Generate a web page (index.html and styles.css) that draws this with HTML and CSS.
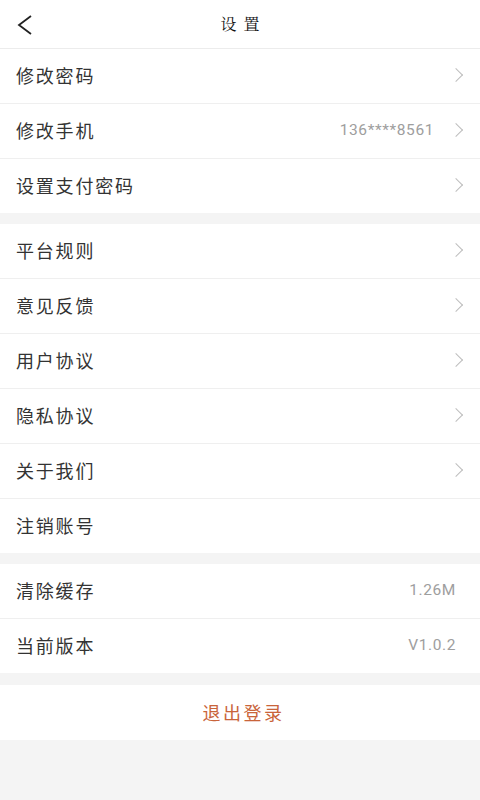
FILE: index.html
```html
<!DOCTYPE html>
<html lang="zh">
<head>
<meta charset="utf-8">
<link rel="stylesheet" href="styles.css">
</head>
<body>
<div class="page">
  <header class="nav">
    <svg class="back" width="16" height="20" viewBox="0 0 16 20"><path d="M14 1 L2 10 L14 19" fill="none" stroke="#222" stroke-width="1.8"/></svg>
    <div class="title">设置</div>
  </header>

  <section class="group">
    <div class="row"><span class="label">修改密码</span><span class="arrow"></span></div>
    <div class="row"><span class="label">修改手机</span><span class="value">136****8561</span><span class="arrow"></span></div>
    <div class="row"><span class="label">设置支付密码</span><span class="arrow"></span></div>
  </section>

  <section class="group">
    <div class="row"><span class="label">平台规则</span><span class="arrow"></span></div>
    <div class="row"><span class="label">意见反馈</span><span class="arrow"></span></div>
    <div class="row"><span class="label">用户协议</span><span class="arrow"></span></div>
    <div class="row"><span class="label">隐私协议</span><span class="arrow"></span></div>
    <div class="row"><span class="label">关于我们</span><span class="arrow"></span></div>
    <div class="row"><span class="label">注销账号</span></div>
  </section>

  <section class="group version">
    <div class="row"><span class="label">清除缓存</span><span class="value end">1.26M</span></div>
    <div class="row"><span class="label">当前版本</span><span class="value end">V1.0.2</span></div>
  </section>

  <section class="group">
    <div class="logout">退出登录</div>
  </section>
</div>
</body>
</html>
```

FILE: styles.css
```css
html, body {
  margin: 0;
  padding: 0;
  background: #f4f4f4;
}
body {
  font-family: "Noto Sans CJK SC", "Noto Sans", sans-serif;
  width: 480px;
  min-height: 800px;
}
.page {
  display: flex;
  flex-direction: column;
}
.nav {
  position: relative;
  height: 48px;
  background: #fff;
  border-bottom: 1px solid #ececec;
  display: flex;
  align-items: center;
  justify-content: center;
}
.back {
  position: absolute;
  left: 17px;
  top: 15px;
}
.title {
  font-family: "Noto Serif CJK SC", "AR PL UKai CN", serif;
  font-size: 16px;
  letter-spacing: 7px;
  color: #111;
  padding-left: 7px;
  margin-top: -2px;
}
.group {
  background: #fff;
  margin-bottom: 11px;
}
.group.version {
  margin-bottom: 12px;
}
.row {
  border-bottom: 1px solid #efefef;
  display: flex;
  align-items: center;
  padding: 0 14px 2px 16px;
  box-sizing: border-box;
  height: 55px;
}
.row:last-child {
  border-bottom: none;
  height: 54px;
}
.label {
  flex: 1;
  font-size: 18px;
  letter-spacing: 1.8px;
  color: #333;
}
.value {
  font-family: "Roboto", "Noto Sans", sans-serif;
  font-size: 15.5px;
  color: #9e9e9e;
  letter-spacing: 0.6px;
  margin-right: 17px;
}
.value.end {
  margin-right: 10px;
}
.arrow {
  width: 9px;
  height: 9px;
  border-top: 1.3px solid #bdbdbd;
  border-right: 1.3px solid #bdbdbd;
  transform: rotate(45deg);
  margin-right: 5px;
}
.logout {
  height: 55px;
  display: flex;
  align-items: center;
  justify-content: center;
  font-size: 18px;
  letter-spacing: 2.5px;
  padding-left: 7px;
  color: #c9643a;
  padding-bottom: 2px;
  box-sizing: border-box;
}
```
